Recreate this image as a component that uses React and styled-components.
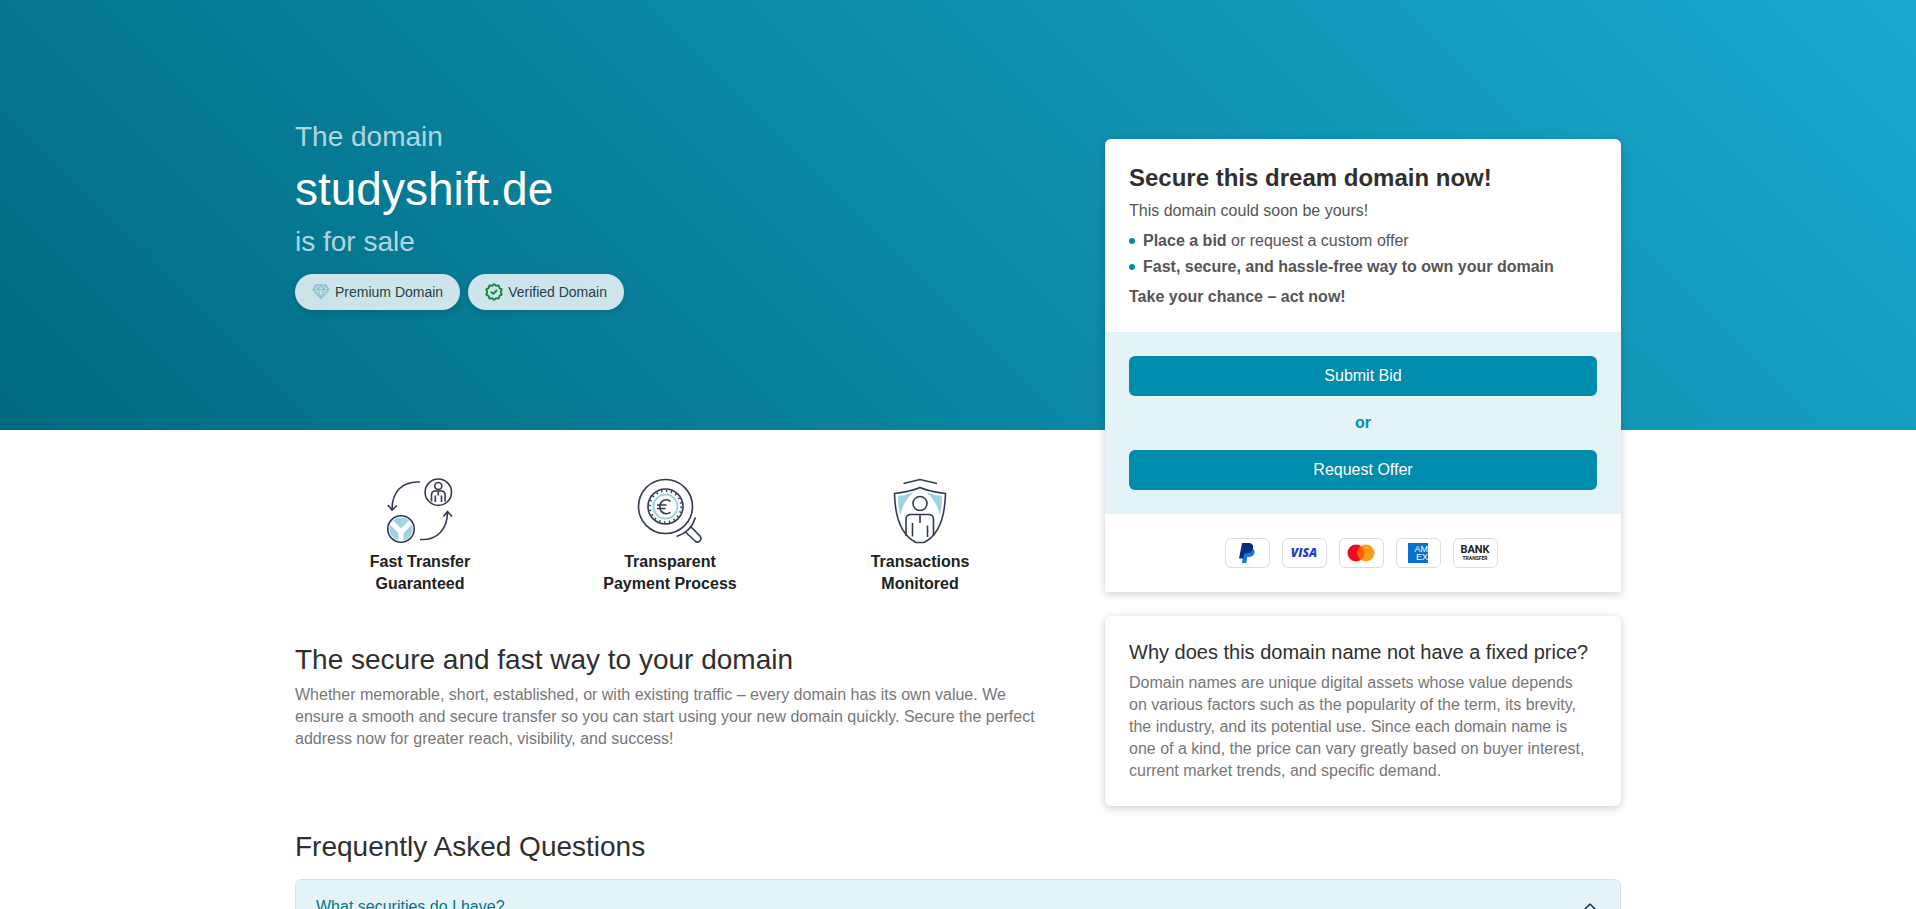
import React from 'react';
import styled, { createGlobalStyle } from 'styled-components';

const features = [
  { icon: <TransferIcon />, lines: ['Fast Transfer', 'Guaranteed'] },
  { icon: <MagnifierIcon />, lines: ['Transparent', 'Payment Process'] },
  { icon: <ShieldIcon />, lines: ['Transactions', 'Monitored'] },
];

function App() {
  return (
    <>
      <GlobalStyle />
      <Hero>
        <Container>
          <HeroTitle>
            <HeroSmall>The domain</HeroSmall>
            <HeroDomain>studyshift.de</HeroDomain>
            <HeroSmall>is for sale</HeroSmall>
          </HeroTitle>
          <Badges>
            <Badge>
              <DiamondIcon />
              Premium Domain
            </Badge>
            <Badge>
              <VerifiedIcon />
              Verified Domain
            </Badge>
          </Badges>
        </Container>
      </Hero>
      <Container as="main">
        <Columns>
          <div>
            <Features>
              {features.map(({ icon, lines }) => (
                <Feature key={lines[0]}>
                  {icon}
                  <span>{lines[0]}</span>
                  <span>{lines[1]}</span>
                </Feature>
              ))}
            </Features>
            <SectionTitle>The secure and fast way to your domain</SectionTitle>
            <Paragraph>
              Whether memorable, short, established, or with existing traffic – every domain has its own value. We
              ensure a smooth and secure transfer so you can start using your new domain quickly. Secure the perfect
              address now for greater reach, visibility, and success!
            </Paragraph>
          </div>
          <Sidebar>
            <Card>
              <CardIntro>
                <CardTitle>Secure this dream domain now!</CardTitle>
                <p>This domain could soon be yours!</p>
                <BulletList>
                  <li>
                    <strong>Place a bid</strong> or request a custom offer
                  </li>
                  <li>
                    <strong>Fast, secure, and hassle-free way to own your domain</strong>
                  </li>
                </BulletList>
                <p>
                  <strong>Take your chance – act now!</strong>
                </p>
              </CardIntro>
              <CardActions>
                <ActionButton type="button">Submit Bid</ActionButton>
                <Or>or</Or>
                <ActionButton type="button">Request Offer</ActionButton>
              </CardActions>
              <Payments>
                <PaypalLogo />
                <VisaLogo />
                <MastercardLogo />
                <AmexLogo />
                <BankLogo />
              </Payments>
            </Card>
            <PriceCard>
              <PriceTitle>Why does this domain name not have a fixed price?</PriceTitle>
              <Paragraph>
                Domain names are unique digital assets whose value depends on various factors such as the popularity
                of the term, its brevity, the industry, and its potential use. Since each domain name is one of a
                kind, the price can vary greatly based on buyer interest, current market trends, and specific demand.
              </Paragraph>
            </PriceCard>
          </Sidebar>
        </Columns>
        <FaqTitle>Frequently Asked Questions</FaqTitle>
        <FaqItem>
          <FaqButton type="button" aria-expanded="true">
            What securities do I have?
            <ChevronIcon />
          </FaqButton>
        </FaqItem>
      </Container>
    </>
  );
}

function DiamondIcon() {
  return (
    <svg width="18" height="18" viewBox="0 0 18 18" fill="none" stroke="#8ac3cf" strokeWidth="1.6" strokeLinejoin="round">
      <path d="M4.2 2h9.6L16.8 6.600 9 15.500 1.200 6.600z" />
      <path d="M1.200 6.600h15.600M4.200 2 6 6.600l3 8.900 3-8.900L13.800 2M6 6.600 9 2l3 4.600" strokeWidth="1.2" />
    </svg>
  );
}

function VerifiedIcon() {
  return (
    <svg width="18" height="18" viewBox="0 0 24 24" fill="none" stroke="#0d8438" strokeWidth="2.4" strokeLinejoin="round" strokeLinecap="round">
      <path d="M12 1.500 14.700 3.700 18.200 3.300 19.200 6.700 22.200 8.500 21 12l1.200 3.500-3 1.800-1 3.400-3.500-.4L12 22.500l-2.700-2.200-3.500.4-1-3.400-3-1.800L3 12 1.800 8.500l3-1.800 1-3.400 3.500.4z" />
      <path d="m8.500 12.300 2.500 2.300 4.500-4.600" />
    </svg>
  );
}

function TransferIcon() {
  return (
    <FeatureSvg viewBox="0 0 66 66">
      <path d="M33 4C15 3 5 14 5 31.500M.800 27l4.200 5 5-4.500" />
      <path d="M33 61.500c17 1 27.500-10 27.500-27.500M56.500 38.500l4-5 4.500 5" />
      <circle cx="51.300" cy="14.200" r="13.200" />
      <circle cx="51.300" cy="8" r="3.500" />
      <path d="M44.500 23.500V17q0-4 4-4h5.600q4 0 4 4v6.500M51.300 13v4.500M48.300 17.500V24M54.500 17.500V24" />
      <circle cx="14" cy="51" r="11.500" fill="#9fd3df" stroke="none" />
      <path d="M14 64V54L4.500 44.500M14 54l9.500-9.500" stroke="#fff" strokeWidth="5" />
      <circle cx="14" cy="51" r="13.200" />
    </FeatureSvg>
  );
}

function MagnifierIcon() {
  return (
    <FeatureSvg viewBox="0 0 66 66">
      <circle cx="28.500" cy="28.500" r="27" />
      <circle cx="28.500" cy="28.500" r="17.500" />
      <circle cx="28.500" cy="28.500" r="15.700" strokeWidth="2" strokeDasharray="1.400 3.530" />
      <circle cx="28.500" cy="28.500" r="12" stroke="#9fd3df" strokeWidth="2" />
      <path d="M33.500 23.500a6.500 7 0 1 0 0 10.500M20 27h9.500M20 30.500h8.500" />
      <path d="M39.500 58.500Q54 54 58.500 39.500M48.500 54l9.500 9q2.800 2.200 5-.2 2-2.400 0-4.800L54 49" />
    </FeatureSvg>
  );
}

function ShieldIcon() {
  return (
    <FeatureSvg viewBox="0 0 66 66">
      <path d="M11 18q9-1 16-4-11 9-14 24Q11 28 11 18zM55 18q-9-1-16-4 11 9 14 24 2-10 2-20z" fill="#9fd3df" stroke="none" />
      <path d="M16.500 5.500 33 1.500l17 4" />
      <path d="M33 9.500Q24 13.500 7.500 15.500C8 39 14 57 29 64.500h8C52 57 58 39 58.500 15.500Q42 13.500 33 9.500z" />
      <circle cx="33" cy="25.500" r="7" />
      <path d="M19 58V41.500q0-5 5-5h17.500q5 0 5 5V58M33 36.500V45M25.500 45v13.500M40.500 47.500V59" />
    </FeatureSvg>
  );
}

function PaypalLogo() {
  return (
    <PaymentBox>
      <svg width="18" height="20" viewBox="0 0 18 20" aria-label="PayPal">
        <path d="M6 5h7.500q3.500 1 3 4.500-.8 4.500-6 4.500H9.300L8.300 20H4z" fill="#1a78dc" />
        <path d="M4 0h6.500q5.200 0 4.500 4.800Q14.200 10.500 8.500 10.500H6.300L5.300 15.500H1z" fill="#062d80" />
      </svg>
    </PaymentBox>
  );
}

function VisaLogo() {
  return (
    <PaymentBox>
      <VisaText>VISA</VisaText>
    </PaymentBox>
  );
}

function MastercardLogo() {
  return (
    <PaymentBox>
      <svg width="28" height="18" viewBox="0 0 28 18" aria-label="Mastercard">
        <circle cx="9" cy="9" r="8.500" fill="#eb0a22" />
        <circle cx="19" cy="9" r="8.500" fill="#f79e1b" />
        <path d="M14 2.130a8.500 8.500 0 0 1 0 13.740 8.500 8.500 0 0 1 0-13.740z" fill="#ff5f00" />
      </svg>
    </PaymentBox>
  );
}

function AmexLogo() {
  return (
    <PaymentBox>
      <AmexSquare>
        <span>AM</span>
        <span>EX</span>
      </AmexSquare>
    </PaymentBox>
  );
}

function BankLogo() {
  return (
    <PaymentBox>
      <BankText>
        BANK
        <small>TRANSFER</small>
      </BankText>
    </PaymentBox>
  );
}

function ChevronIcon() {
  return (
    <svg width="16" height="16" viewBox="0 0 16 16" fill="none" stroke="#0b3350" strokeWidth="1.500" strokeLinecap="round" strokeLinejoin="round">
      <path d="m2 11 6-6 6 6" />
    </svg>
  );
}

const primary = '#008cad';
const paleBlue = '#e3f3f7';
const cardShadow = '0 2px 8px rgba(0, 0, 0, 0.2)';

const GlobalStyle = createGlobalStyle`
  * {
    box-sizing: border-box;
  }

  body {
    margin: 0;
    overflow: hidden;
    background: #fff;
    color: #555;
    font-family: 'Liberation Sans', Arial, sans-serif;
    font-size: 16px;
    line-height: 22px;
  }

  h1, h2, h3, p, ul {
    margin: 0;
    padding: 0;
    font-weight: normal;
  }
`;

const Container = styled.div`
  width: 100%;
  max-width: 1350px;
  margin: 0 auto;
  padding: 0 12px;
`;

const Hero = styled.header`
  height: 430px;
  padding-top: 117px;
  background: linear-gradient(45deg, #006a80, #19a9cf);
`;

const HeroTitle = styled.h1`
  display: flex;
  flex-direction: column;
  gap: 8px;
`;

const HeroSmall = styled.span`
  color: rgba(255, 255, 255, 0.7);
  font-size: 28px;
  line-height: 40px;
`;

const HeroDomain = styled.span`
  color: #fff;
  font-size: 46px;
  line-height: 49px;
`;

const Badges = styled.div`
  display: flex;
  gap: 8px;
  margin-top: 12px;
`;

const Badge = styled.span`
  display: flex;
  align-items: center;
  gap: 5px;
  height: 36px;
  padding: 0 17px;
  border-radius: 18px;
  background: rgba(255, 255, 255, 0.8);
  box-shadow: 0 2px 6px rgba(0, 0, 0, 0.15);
  color: #24414c;
  font-size: 14px;
`;

const Columns = styled.div`
  display: grid;
  grid-template-columns: minmax(0, 750fr) minmax(0, 516fr);
  column-gap: 60px;
`;

const Features = styled.div`
  display: grid;
  grid-template-columns: repeat(3, 1fr);
  padding-top: 48px;
`;

const Feature = styled.div`
  display: flex;
  flex-direction: column;
  align-items: center;
  color: #212121;
  font-weight: bold;
`;

const FeatureSvg = styled.svg`
  width: 66px;
  height: 66px;
  margin-bottom: 7px;
  fill: none;
  stroke: #333a50;
  stroke-width: 1.6;
`;

const SectionTitle = styled.h2`
  margin: 48px 0 8px;
  color: #2f2f2f;
  font-size: 28px;
  line-height: 33px;
`;

const Paragraph = styled.p`
  color: #777;
`;

const Sidebar = styled.aside`
  display: flex;
  flex-direction: column;
  gap: 24px;
  margin-top: -291px;
`;

const Card = styled.section`
  overflow: hidden;
  border-radius: 6px 6px 2px 2px;
  background: #fff;
  box-shadow: ${cardShadow};
`;

const CardIntro = styled.div`
  display: flex;
  flex-direction: column;
  gap: 8px;
  padding: 24px;
`;

const CardTitle = styled.h2`
  color: #2f2f2f;
  font-size: 24px;
  font-weight: bold;
  line-height: 29px;
`;

const BulletList = styled.ul`
  display: flex;
  flex-direction: column;
  gap: 4px;
  list-style: none;

  li {
    display: flex;
    align-items: center;
    white-space: pre;
  }

  li::before {
    content: '';
    width: 6px;
    height: 6px;
    margin-right: 8px;
    border-radius: 50%;
    background: ${primary};
  }
`;

const CardActions = styled.div`
  display: flex;
  flex-direction: column;
  padding: 24px;
  background: ${paleBlue};
`;

const ActionButton = styled.button`
  height: 40px;
  border: 0;
  border-radius: 6px;
  background: ${primary};
  color: #fff;
  font: inherit;
  cursor: pointer;
`;

const Or = styled.span`
  padding: 16px 0;
  color: ${primary};
  font-weight: bold;
  text-align: center;
`;

const Payments = styled.div`
  display: flex;
  justify-content: center;
  gap: 12px;
  padding: 24px 28px 24px 24px;
`;

const PaymentBox = styled.span`
  display: flex;
  align-items: center;
  justify-content: center;
  width: 45px;
  height: 30px;
  border: 1px solid #ddd;
  border-radius: 6px;
`;

const VisaText = styled.span`
  color: #2438c8;
  font-family: 'Open Sans', sans-serif;
  font-size: 12px;
  font-style: italic;
  font-weight: 800;
`;

const AmexSquare = styled.span`
  display: flex;
  flex-direction: column;
  align-items: flex-end;
  width: 20px;
  height: 20px;
  padding-top: 2px;
  overflow: hidden;
  background: #0a70ce;
  color: #fff;
  font-size: 9px;
  line-height: 8px;
`;

const BankText = styled.span`
  display: flex;
  flex-direction: column;
  align-items: center;
  color: #222;
  font-family: Roboto, sans-serif;
  font-size: 11px;
  font-weight: bold;
  line-height: 10px;

  small {
    font-size: 5px;
    line-height: 6px;
  }
`;

const PriceCard = styled(Card)`
  padding: 24px;
  border-radius: 6px;

  ${Paragraph} {
    padding-right: 6px;
  }
`;

const PriceTitle = styled.h3`
  margin-bottom: 8px;
  color: #2f2f2f;
  font-size: 20px;
  line-height: 24px;
`;

const FaqTitle = styled.h2`
  margin: 24px 0 16px;
  color: #2f2f2f;
  font-size: 28px;
  line-height: 33px;
`;

const FaqItem = styled.section`
  overflow: hidden;
  border: 1px solid #d5e3e7;
  border-radius: 6px;
  background: ${paleBlue};
`;

const FaqButton = styled.button`
  display: flex;
  align-items: center;
  justify-content: space-between;
  width: 100%;
  padding: 16px 22px 16px 20px;
  border: 0;
  background: none;
  color: #00758c;
  font: inherit;
  cursor: pointer;
`;

export default App;
